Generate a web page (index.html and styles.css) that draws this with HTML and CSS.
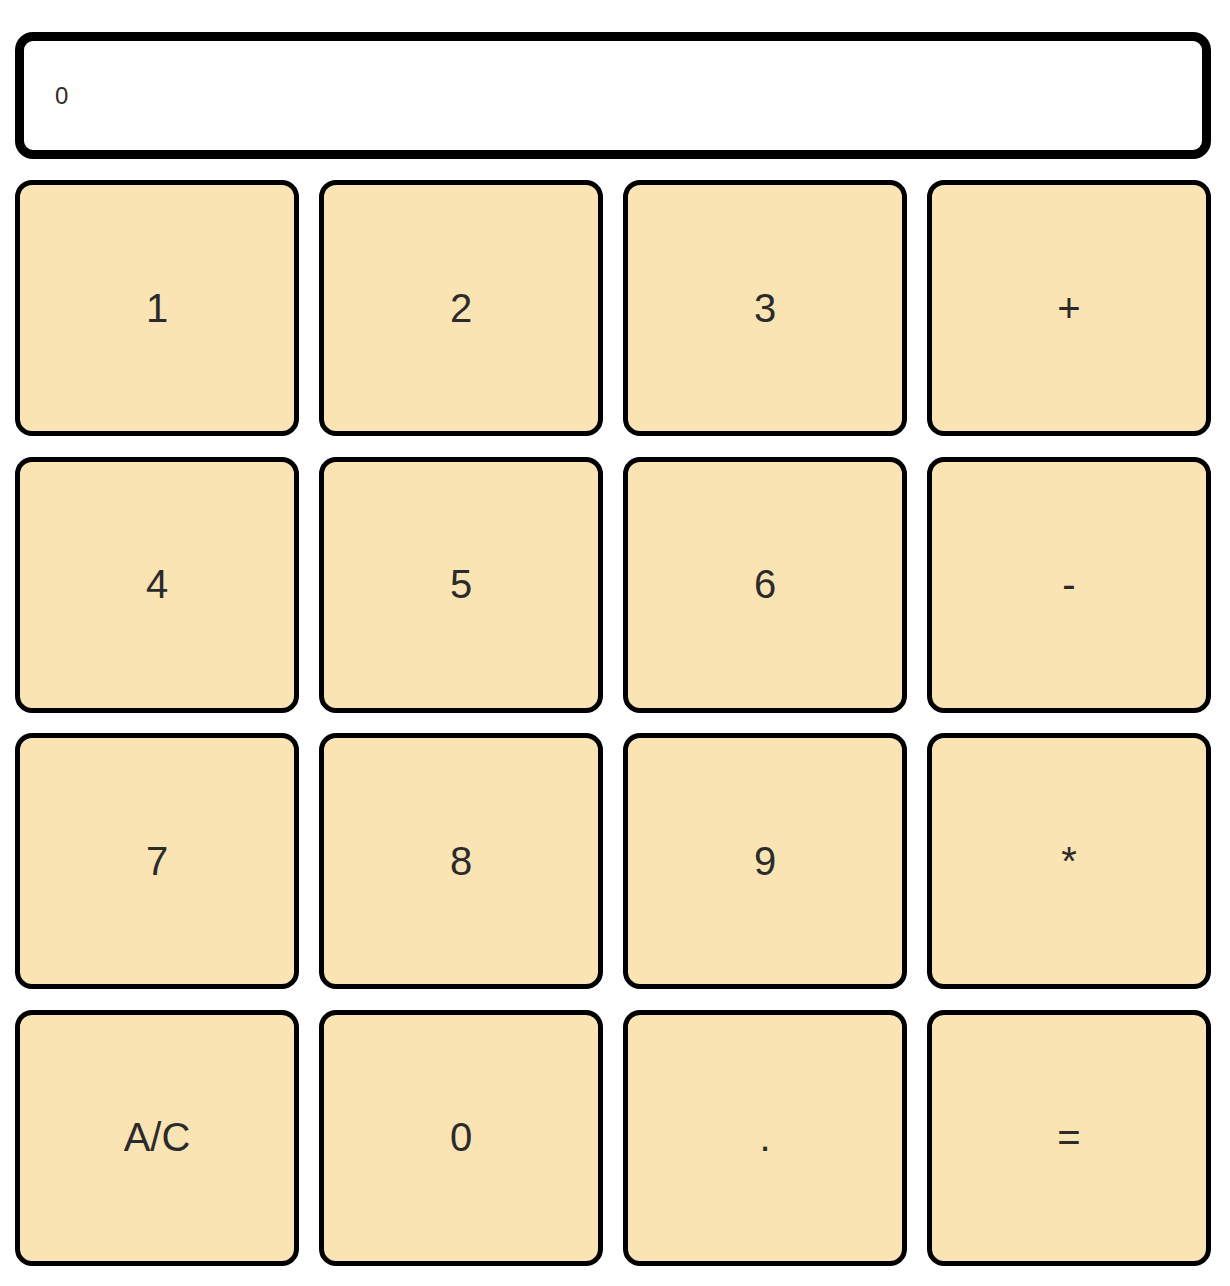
FILE: index.html
```html
<!DOCTYPE html>
<html lang="en">

<head>
  <meta charset="UTF-8" />
  <meta name="viewport" content="width=device-width, initial-scale=1.0" />
  <title>Calculator</title>
  <link rel="stylesheet" href="styles.css">
</head>

<body>

  <main class="calculator">

    <div class="display">0</div>

    <div class="keys">
      <button class="key">1</button>
      <button class="key">2</button>
      <button class="key">3</button>
      <button class="key">+</button>
      <button class="key">4</button>
      <button class="key">5</button>
      <button class="key">6</button>
      <button class="key">-</button>
      <button class="key">7</button>
      <button class="key">8</button>
      <button class="key">9</button>
      <button class="key">*</button>
      <button class="key">A/C</button>
      <button class="key">0</button>
      <button class="key">.</button>
      <button class="key">=</button>
    </div>

  </main>

</body>

</html>
```

FILE: styles.css
```css
* {
  box-sizing: border-box;
  margin: 0;
  padding: 0;
}
:root {
  --key-bg: #fae4b4;
  --ink: #2b2b2b;
  --line: #000;
}
body {
  background-color: #fff;
  color: var(--ink);
  font-family: "Liberation Sans", Arial, sans-serif;
}
.calculator {
  margin: 32px 0 0 15px;
  width: 1196px;
}
.display {
  background-color: #fff;
  border: 9px solid var(--line);
  border-radius: 18px;
  display: flex;
  align-items: center;
  font-size: 24px;
  height: 127px;
  margin-bottom: 21px;
  padding-left: 31px;
}
.keys {
  display: grid;
  grid-template-columns: repeat(4, 1fr);
  grid-auto-rows: 256px;
  column-gap: 20px;
  row-gap: 20.67px;
}
.key {
  background-color: var(--key-bg);
  border: 5px solid var(--line);
  border-radius: 17px;
  color: var(--ink);
  cursor: pointer;
  font: 40px "Liberation Sans", Arial, sans-serif;
}
```
